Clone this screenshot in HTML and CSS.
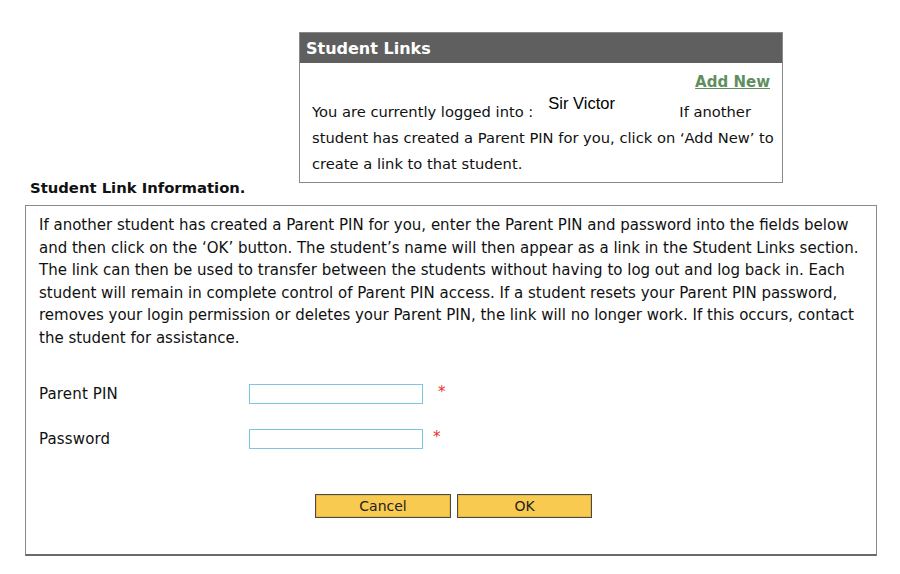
FILE: index.html
```html
<!DOCTYPE html>
<html>
<head>
<meta charset="utf-8">
<link rel="stylesheet" href="styles.css">
</head>
<body>
<div class="links-box">
  <div class="links-head">Student Links</div>
  <div class="links-body">
    <div class="add-row"><a class="add-new" href="#">Add New</a></div>
    <p class="links-text">You are currently logged into :<span class="name-slot"><span class="name">Sir Victor</span></span>If another student has created a Parent PIN for you, click on ‘Add New’ to create a link to that student.</p>
  </div>
</div>
<div class="info-title">Student Link Information.</div>
<div class="info-box">
  <p class="info-text">If another student has created a Parent PIN for you, enter the Parent PIN and password into the fields below and then click on the ‘OK’ button. The student’s name will then appear as a link in the Student Links section. The link can then be used to transfer between the students without having to log out and log back in. Each student will remain in complete control of Parent PIN access. If a student resets your Parent PIN password, removes your login permission or deletes your Parent PIN, the link will no longer work. If this occurs, contact the student for assistance.</p>
  <div class="form-row row-pin">
    <label class="lbl">Parent PIN</label>
    <input class="field" type="text">
    <span class="req req-wide">*</span>
  </div>
  <div class="form-row row-pw">
    <label class="lbl">Password</label>
    <input class="field" type="password">
    <span class="req">*</span>
  </div>
  <div class="buttons">
    <button class="btn btn-cancel">Cancel</button>
    <button class="btn btn-ok">OK</button>
  </div>
</div>
</body>
</html>
```
FILE: styles.css
```css
body {
  margin: 0;
  font-family: "DejaVu Sans", Verdana, sans-serif;
  font-size: 14px;
  color: #111;
  background: #fff;
}
.links-box {
  margin: 32px 0 0 299px;
  width: 482px;
  border: 1px solid #8a8a8a;
}
.links-head {
  background: #5f5f5f;
  color: #fff;
  font-weight: bold;
  font-size: 16px;
  height: 30px;
  line-height: 31px;
  padding-left: 6px;
}
.links-body {
  padding: 9px 12px 5px 12px;
}
.add-row {
  text-align: right;
  line-height: 20px;
  height: 20px;
  margin-bottom: 6px;
}
.add-new {
  color: #5f8f5f;
  font-weight: bold;
  font-size: 15px;
  text-decoration: underline;
}
.links-text {
  margin: 0 -8px 0 0;
  line-height: 26px;
  font-size: 14.7px;
}
.name-slot {
  display: inline-block;
  width: 146px;
  padding-left: 15px;
  box-sizing: border-box;
  vertical-align: 8px;
  line-height: 10px;
}
.name {
  font-family: "Liberation Sans", Arial, sans-serif;
  font-size: 16.5px;
  color: #000;
}
.info-title {
  margin: 0 0 0 30px;
  font-weight: bold;
  font-size: 14.8px;
  line-height: 10px;
  height: 22px;
}
.info-box {
  margin-left: 25px;
  width: 824px;
  border: 1px solid #8a8a8a;
  border-bottom: 2px solid #6a6a6a;
  padding: 8px 13px 36px 13px;
}
.info-text {
  margin: 0;
  line-height: 22.6px;
  font-size: 15px;
}
.form-row {
  display: flex;
  align-items: center;
  height: 20px;
}
.row-pin {
  margin-top: 34px;
}
.row-pw {
  margin-top: 25px;
}
.lbl {
  width: 210px;
  font-size: 15px;
  letter-spacing: 0.15px;
}
.field {
  width: 174px;
  height: 20px;
  box-sizing: border-box;
  border: 1px solid #7cc6e2;
  margin: 0;
  padding: 0 3px;
}
.req {
  color: #e8322a;
  font-size: 15px;
  margin-left: 10px;
  margin-top: -3px;
}
.req-wide {
  margin-left: 15px;
}
.buttons {
  display: flex;
  gap: 6px;
  margin: 45px 0 0 276px;
}
.btn {
  height: 24px;
  border: 1px solid #4a4a4a;
  box-shadow: inset 0 0 0 1px #e9b83c;
  background: #f8ca50;
  font-family: "DejaVu Sans", Verdana, sans-serif;
  font-size: 14px;
  color: #222;
  padding: 0;
}
.btn-cancel { width: 136px; }
.btn-ok { width: 135px; }
```
